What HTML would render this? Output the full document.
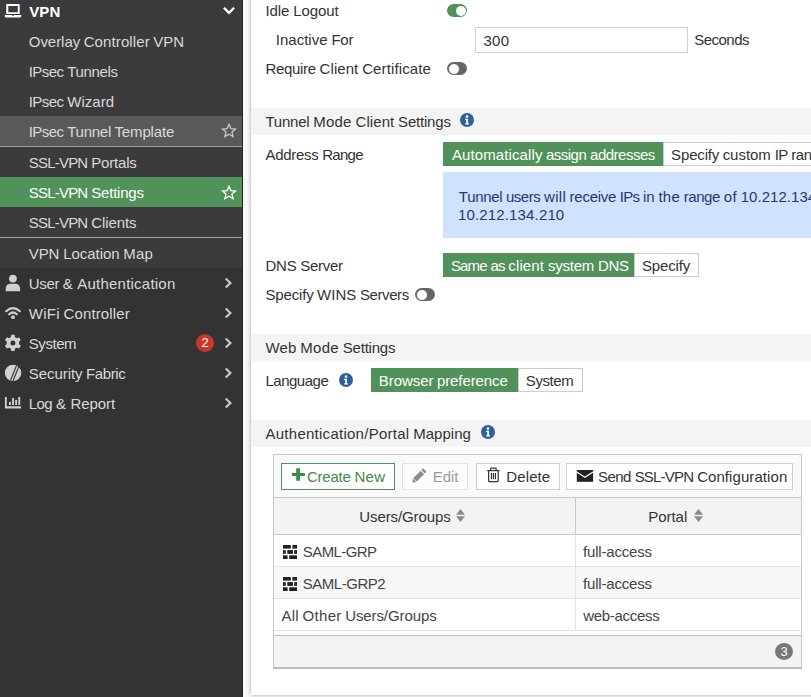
<!DOCTYPE html>
<html><head><meta charset="utf-8">
<style>
html,body{margin:0;padding:0;}
body{width:811px;height:697px;overflow:hidden;position:relative;background:#f9f9f9;font-family:"Liberation Sans",sans-serif;}
.a{position:absolute;}
.t{position:absolute;white-space:nowrap;}
.sb{left:0;top:0;width:242px;height:697px;background:#333333;}
.card{left:251px;top:-10px;width:600px;height:705px;background:#fff;box-shadow:0 0 4px rgba(0,0,0,0.35);}
.bar{left:251px;width:560px;height:27px;background:#f4f4f4;}
.gbtn{background:#51915a;}
.wbtn{background:#fff;border:1px solid #cccccc;box-sizing:border-box;}
.tog{width:20px;height:13px;border-radius:7px;box-sizing:border-box;}
.info{width:14px;height:14px;border-radius:50%;background:#2d6199;}
</style></head><body>
<!-- sidebar -->
<div class="a sb"></div>
<div class="a" style="left:0;top:0;width:242px;height:268px;background:#3b3b3b"></div>
<div class="a" style="left:242px;top:0;width:1px;height:697px;background:#262626"></div>
<div class="a" style="left:0;top:116px;width:242px;height:30px;background:#595959"></div>
<div class="a" style="left:0;top:146px;width:242px;height:1px;background:#a3a3a3"></div>
<div class="a" style="left:0;top:177px;width:242px;height:30px;background:#51915a"></div>
<div class="a" style="left:0;top:237px;width:242px;height:1px;background:#a3a3a3"></div>

<!-- card -->
<div class="a card"></div>
<div class="a bar" style="top:108px"></div>
<div class="a bar" style="top:334px"></div>
<div class="a bar" style="top:420px"></div>

<!-- toggles -->
<div class="a tog" style="left:447px;top:4px;background:#51915a"></div>
<div class="a" style="left:456px;top:5.5px;width:10px;height:10px;border-radius:50%;background:#fff"></div>
<div class="a tog" style="left:447px;top:62px;background:#666"></div>
<div class="a" style="left:447.5px;top:62.5px;width:12px;height:12px;border-radius:50%;background:#fff;border:1px solid #666;box-sizing:border-box"></div>
<div class="a tog" style="left:415px;top:288px;background:#666"></div>
<div class="a" style="left:415.5px;top:288.5px;width:12px;height:12px;border-radius:50%;background:#fff;border:1px solid #666;box-sizing:border-box"></div>

<!-- input -->
<div class="a" style="left:475px;top:27px;width:213px;height:26px;border:1px solid #cfcfcf;box-sizing:border-box;background:#fff"></div>

<!-- address range buttons -->
<div class="a gbtn" style="left:443px;top:142px;width:220px;height:24px"></div>
<div class="a wbtn" style="left:663px;top:142px;width:200px;height:24px"></div>
<div class="a" style="left:443px;top:172px;width:400px;height:66px;background:#cfe2ff"></div>

<!-- dns -->
<div class="a gbtn" style="left:443px;top:253px;width:191px;height:24px"></div>
<div class="a wbtn" style="left:634px;top:253px;width:65px;height:24px"></div>

<!-- language -->
<div class="a gbtn" style="left:371px;top:368px;width:147px;height:24px"></div>
<div class="a wbtn" style="left:518px;top:368px;width:65px;height:24px"></div>

<!-- info icons -->
<svg class="a" style="left:459.8px;top:112.8px" width="14" height="14" viewBox="0 0 14 14"><circle cx="7" cy="7" r="7" fill="#2d6199"/><circle cx="7" cy="3.6" r="1.3" fill="#fff"/><path d="M5.2 5.8h2.8v4.4h1v1.3H5.2v-1.3h1v-3.1h-1z" fill="#fff"/></svg>
<svg class="a" style="left:338.9px;top:372.9px" width="14" height="14" viewBox="0 0 14 14"><circle cx="7" cy="7" r="7" fill="#2d6199"/><circle cx="7" cy="3.6" r="1.3" fill="#fff"/><path d="M5.2 5.8h2.8v4.4h1v1.3H5.2v-1.3h1v-3.1h-1z" fill="#fff"/></svg>
<svg class="a" style="left:480.7px;top:425px" width="14" height="14" viewBox="0 0 14 14"><circle cx="7" cy="7" r="7" fill="#2d6199"/><circle cx="7" cy="3.6" r="1.3" fill="#fff"/><path d="M5.2 5.8h2.8v4.4h1v1.3H5.2v-1.3h1v-3.1h-1z" fill="#fff"/></svg>

<!-- table -->
<div class="a" style="left:273px;top:454px;width:529px;height:215px;border:1px solid #c8c8c8;border-bottom:2px solid #bdbdbd;box-sizing:border-box;background:#fff"></div>
<div class="a" style="left:274px;top:455px;width:527px;height:42px;background:#f9f9f9;border-bottom:1px solid #c8c8c8"></div>
<div class="a" style="left:281px;top:463px;width:114px;height:27px;border:1px solid #51915a;box-sizing:border-box;background:#fff"></div>
<div class="a" style="left:402px;top:463px;width:66px;height:27px;border:1px solid #e3e3e3;box-sizing:border-box;background:#fcfcfc"></div>
<div class="a" style="left:476px;top:463px;width:84px;height:27px;border:1px solid #cfcfcf;box-sizing:border-box;background:#fff"></div>
<div class="a" style="left:566px;top:463px;width:227px;height:27px;border:1px solid #cfcfcf;box-sizing:border-box;background:#fff"></div>
<!-- header -->
<div class="a" style="left:274px;top:498px;width:527px;height:36px;background:#f3f3f3;border-bottom:1px solid #c8c8c8"></div>
<div class="a" style="left:575px;top:498px;width:1px;height:36px;background:#c8c8c8"></div>
<div class="a" style="left:274px;top:566px;width:527px;height:1px;background:#e2e2e2"></div>
<div class="a" style="left:274px;top:567px;width:527px;height:31px;background:#f7f7f7"></div>
<div class="a" style="left:274px;top:598px;width:527px;height:1px;background:#e2e2e2"></div>
<div class="a" style="left:274px;top:630px;width:527px;height:1px;background:#e2e2e2"></div>
<div class="a" style="left:575px;top:535px;width:1px;height:96px;background:#e2e2e2"></div>
<!-- footer -->
<div class="a" style="left:274px;top:635px;width:527px;height:32px;background:#f3f3f3;border-top:1px solid #c0c0c0;box-sizing:border-box"></div>
<div class="a" style="left:775px;top:643px;width:18px;height:17px;border-radius:50%;background:#777;color:#fff;font-size:13px;line-height:17px;text-align:center">3</div>

<!-- sort icons -->
<svg class="a" style="left:455.8px;top:508.8px" width="9" height="13" viewBox="0 0 9 13"><path d="M4.5 0L9 5.8H0z M0 7.3H9L4.5 13z" fill="#8a8a8a"/></svg>
<svg class="a" style="left:693.6px;top:508.8px" width="9" height="13" viewBox="0 0 9 13"><path d="M4.5 0L9 5.8H0z M0 7.3H9L4.5 13z" fill="#8a8a8a"/></svg>


<!-- sidebar icons -->
<svg class="a" style="left:0;top:0" width="26" height="22" viewBox="0 0 26 22"><path d="M6.25 4h13.45v10.1H6.25z M8.3 6.1v6.1h9.5V6.1z" fill="#fff" fill-rule="evenodd"/><path d="M4.8 14.9h7.4v0.9h1.7v-0.9h7.3v1.4q0 1.3-1.3 1.3H6.1q-1.3 0-1.3-1.3z" fill="#fff"/></svg>
<svg class="a" style="left:220px;top:4px" width="18" height="14" viewBox="0 0 18 14"><path d="M4.7 4.6L9 8.9L13.3 4.6" fill="none" stroke="#fff" stroke-width="2.4" stroke-linecap="square"/></svg>
<svg class="a" style="left:220px;top:122px" width="18" height="18" viewBox="0 0 18 18"><path d="M9 2.3L10.9 6.6L15.5 7L12 10.1L13.1 14.6L9 12.2L4.9 14.6L6 10.1L2.5 7L7.1 6.6z" fill="none" stroke="#c8c8c8" stroke-width="1.3" stroke-linejoin="miter"/></svg>
<svg class="a" style="left:220px;top:183.5px" width="18" height="18" viewBox="0 0 18 18"><path d="M9 2.3L10.9 6.6L15.5 7L12 10.1L13.1 14.6L9 12.2L4.9 14.6L6 10.1L2.5 7L7.1 6.6z" fill="none" stroke="#fff" stroke-width="1.3" stroke-linejoin="miter"/></svg>
<svg class="a" style="left:0;top:268px" width="26" height="30" viewBox="0 0 26 30"><circle cx="12.9" cy="10.6" r="3.9" fill="#d0d0d0"/><path d="M5.7 23.2v-2.2q0-5.3 5.3-5.3h3.8q5.3 0 5.3 5.3v2.2z" fill="#d0d0d0"/></svg>
<svg class="a" style="left:0;top:298px" width="26" height="30" viewBox="0 0 26 30"><path d="M6.2 13.2Q13 7 19.8 13.2" fill="none" stroke="#d0d0d0" stroke-width="2.2" stroke-linecap="round"/><path d="M9.2 16.2Q13 12.8 16.8 16.2" fill="none" stroke="#d0d0d0" stroke-width="2.2" stroke-linecap="round"/><circle cx="13" cy="19.2" r="1.9" fill="#d0d0d0"/></svg>
<svg class="a" style="left:0;top:328px" width="26" height="30" viewBox="0 0 26 30"><g fill="#d0d0d0" transform="translate(12.9 14.9)"><circle r="6.2"/><rect x="-1.9" y="-8.2" width="3.8" height="16.4" rx="0.8"/><rect x="-1.9" y="-8.2" width="3.8" height="16.4" rx="0.8" transform="rotate(60)"/><rect x="-1.9" y="-8.2" width="3.8" height="16.4" rx="0.8" transform="rotate(120)"/></g><circle cx="12.9" cy="14.9" r="2.5" fill="#333"/></svg>
<svg class="a" style="left:0;top:358px" width="26" height="30" viewBox="0 0 26 30"><defs><clipPath id="fc"><circle cx="13.05" cy="14.9" r="8.2"/></clipPath></defs><circle cx="13.05" cy="14.9" r="8.2" fill="#d0d0d0"/><g clip-path="url(#fc)" stroke="#333" stroke-width="1.1"><path d="M17.5 5L9.5 25"/><path d="M20 5.5L12 25.5"/></g></svg>
<svg class="a" style="left:0;top:388px" width="26" height="30" viewBox="0 0 26 30"><path d="M4.9 9h1.9v9.3H21v2.2H4.9z" fill="#d0d0d0"/><rect x="9" y="13.9" width="1.9" height="3.1" fill="#d0d0d0"/><rect x="12.1" y="10" width="1.9" height="7" fill="#d0d0d0"/><rect x="15.2" y="11.9" width="1.9" height="5.1" fill="#d0d0d0"/><rect x="18.3" y="9" width="1.9" height="8" fill="#d0d0d0"/></svg>
<svg class="a" style="left:220px;top:268px" width="18" height="150" viewBox="0 0 18 150"><g fill="none" stroke="#c8c8c8" stroke-width="2.2" stroke-linecap="square"><path d="M6.5 11.3L10.4 15L6.5 18.7"/><path d="M6.5 41.3L10.4 45L6.5 48.7"/><path d="M6.5 71.3L10.4 75L6.5 78.7"/><path d="M6.5 101.3L10.4 105L6.5 108.7"/><path d="M6.5 131.3L10.4 135L6.5 138.7"/></g></svg>
<div class="a" style="left:196px;top:334px;width:18px;height:18px;border-radius:50%;background:#c9372c;color:#fff;font-size:13px;line-height:18px;text-align:center">2</div>

<!-- table icons -->
<svg class="a" style="left:290px;top:466px" width="17" height="17" viewBox="0 0 17 17"><path d="M6.2 2.2h3.9v4.8h4.8v3H10.1v4.8H6.2V10H2V7h4.2z" fill="#3f8a44"/></svg>
<svg class="a" style="left:410px;top:466px" width="19" height="19" viewBox="0 0 19 19"><path d="M13 2.3l3.5 3.5-1.6 1.6-3.5-3.5z M10.6 4.7l3.5 3.5-7.3 7.3-3.5-3.5z M2.9 12.4l3.5 3.5-3.8 0.9z" fill="#8c8c8c"/></svg>
<svg class="a" style="left:485px;top:466px" width="17" height="18" viewBox="0 0 17 18"><g fill="none" stroke="#333" stroke-width="1.2"><path d="M2.2 4.6H14.6"/><path d="M5.6 4.5V2.9q0-0.8 0.8-0.8h4q0.8 0 0.8 0.8v1.6"/><path d="M3.6 4.6v10.1q0 1 1 1h7.6q1 0 1-1V4.6"/><path d="M6.4 7v6.2 M8.4 7v6.2 M10.4 7v6.2"/></g></svg>
<svg class="a" style="left:576px;top:469px" width="18" height="14" viewBox="0 0 18 14"><path d="M0.8 1h16.3v11.8H0.8z" fill="#222"/><path d="M0.8 3L8.9 8.3L17.1 3" fill="none" stroke="#fff" stroke-width="1.2"/></svg>
<svg class="a" style="left:283px;top:545px" width="14" height="14" viewBox="0 0 14 14"><g fill="#222"><rect x="0" y="0" width="7.8" height="3.6"/><rect x="9.4" y="0" width="4.6" height="3.6"/><rect x="0" y="5.1" width="2.7" height="3.8"/><rect x="4.3" y="5.1" width="5.7" height="3.8"/><rect x="11.2" y="5.1" width="2.8" height="3.8"/><rect x="0" y="10.3" width="4.6" height="3.7"/><rect x="6.2" y="10.3" width="7.8" height="3.7"/></g></svg>
<svg class="a" style="left:283px;top:577px" width="14" height="14" viewBox="0 0 14 14"><g fill="#222"><rect x="0" y="0" width="7.8" height="3.6"/><rect x="9.4" y="0" width="4.6" height="3.6"/><rect x="0" y="5.1" width="2.7" height="3.8"/><rect x="4.3" y="5.1" width="5.7" height="3.8"/><rect x="11.2" y="5.1" width="2.8" height="3.8"/><rect x="0" y="10.3" width="4.6" height="3.7"/><rect x="6.2" y="10.3" width="7.8" height="3.7"/></g></svg>

<div class="t" style="left:29.20px;top:2.6px;color:#ffffff;font-size:15px;line-height:17px;font-weight:700;letter-spacing:0.141px">VPN</div>
<div class="t" style="left:28.75px;top:33.0px;color:#d9d9d9;font-size:15px;line-height:17px;font-weight:400;letter-spacing:-0.036px">Overlay</div>
<div class="t" style="left:83.67px;top:33.0px;color:#d9d9d9;font-size:15px;line-height:17px;font-weight:400;letter-spacing:0.111px">Controller</div>
<div class="t" style="left:153.33px;top:33.0px;color:#d9d9d9;font-size:15px;line-height:17px;font-weight:400;letter-spacing:-0.073px">VPN</div>
<div class="t" style="left:28.75px;top:63.0px;color:#d9d9d9;font-size:15px;line-height:17px;font-weight:400;letter-spacing:-0.581px">IPsec</div>
<div class="t" style="left:67.19px;top:63.0px;color:#d9d9d9;font-size:15px;line-height:17px;font-weight:400;letter-spacing:-0.350px">Tunnels</div>
<div class="t" style="left:28.75px;top:93.0px;color:#d9d9d9;font-size:15px;line-height:17px;font-weight:400;letter-spacing:-0.581px">IPsec</div>
<div class="t" style="left:67.19px;top:93.0px;color:#d9d9d9;font-size:15px;line-height:17px;font-weight:400;letter-spacing:0.036px">Wizard</div>
<div class="t" style="left:28.75px;top:123.0px;color:#d9d9d9;font-size:15px;line-height:17px;font-weight:400;letter-spacing:-0.581px">IPsec</div>
<div class="t" style="left:67.19px;top:123.0px;color:#d9d9d9;font-size:15px;line-height:17px;font-weight:400;letter-spacing:-0.242px">Tunnel</div>
<div class="t" style="left:114.44px;top:123.0px;color:#d9d9d9;font-size:15px;line-height:17px;font-weight:400;letter-spacing:-0.127px">Template</div>
<div class="t" style="left:28.75px;top:154.0px;color:#d9d9d9;font-size:15px;line-height:17px;font-weight:400;letter-spacing:-0.795px">SSL-VPN</div>
<div class="t" style="left:91.23px;top:154.0px;color:#d9d9d9;font-size:15px;line-height:17px;font-weight:400;letter-spacing:-0.176px">Portals</div>
<div class="t" style="left:28.75px;top:184.0px;color:#ffffff;font-size:15px;line-height:17px;font-weight:400;letter-spacing:-0.795px">SSL-VPN</div>
<div class="t" style="left:91.23px;top:184.0px;color:#ffffff;font-size:15px;line-height:17px;font-weight:400;letter-spacing:-0.201px">Settings</div>
<div class="t" style="left:28.75px;top:214.0px;color:#d9d9d9;font-size:15px;line-height:17px;font-weight:400;letter-spacing:-0.795px">SSL-VPN</div>
<div class="t" style="left:91.23px;top:214.0px;color:#d9d9d9;font-size:15px;line-height:17px;font-weight:400;letter-spacing:-0.092px">Clients</div>
<div class="t" style="left:28.75px;top:245.0px;color:#d9d9d9;font-size:15px;line-height:17px;font-weight:400;letter-spacing:-0.073px">VPN</div>
<div class="t" style="left:63.22px;top:245.0px;color:#d9d9d9;font-size:15px;line-height:17px;font-weight:400;letter-spacing:-0.053px">Location</div>
<div class="t" style="left:123.34px;top:245.0px;color:#d9d9d9;font-size:15px;line-height:17px;font-weight:400;letter-spacing:0.130px">Map</div>
<div class="t" style="left:28.75px;top:275.0px;color:#d9d9d9;font-size:15px;line-height:17px;font-weight:400;letter-spacing:-0.277px">User</div>
<div class="t" style="left:62.83px;top:275.0px;color:#d9d9d9;font-size:15px;line-height:17px;font-weight:400;letter-spacing:0.672px">&amp;</div>
<div class="t" style="left:77.34px;top:275.0px;color:#d9d9d9;font-size:15px;line-height:17px;font-weight:400;letter-spacing:0.219px">Authentication</div>
<div class="t" style="left:28.75px;top:305.0px;color:#d9d9d9;font-size:15px;line-height:17px;font-weight:400;letter-spacing:0.258px">WiFi</div>
<div class="t" style="left:63.62px;top:305.0px;color:#d9d9d9;font-size:15px;line-height:17px;font-weight:400;letter-spacing:0.111px">Controller</div>
<div class="t" style="left:28.75px;top:335.0px;color:#d9d9d9;font-size:15px;line-height:17px;font-weight:400;letter-spacing:-0.430px">System</div>
<div class="t" style="left:28.75px;top:365.0px;color:#d9d9d9;font-size:15px;line-height:17px;font-weight:400;letter-spacing:-0.059px">Security</div>
<div class="t" style="left:85.94px;top:365.0px;color:#d9d9d9;font-size:15px;line-height:17px;font-weight:400;letter-spacing:-0.365px">Fabric</div>
<div class="t" style="left:28.75px;top:395.0px;color:#d9d9d9;font-size:15px;line-height:17px;font-weight:400;letter-spacing:-0.531px">Log</div>
<div class="t" style="left:56.02px;top:395.0px;color:#d9d9d9;font-size:15px;line-height:17px;font-weight:400;letter-spacing:0.672px">&amp;</div>
<div class="t" style="left:70.55px;top:395.0px;color:#d9d9d9;font-size:15px;line-height:17px;font-weight:400;letter-spacing:-0.073px">Report</div>
<div class="t" style="left:265.50px;top:1.7px;color:#333333;font-size:15px;line-height:17px;font-weight:400;letter-spacing:-0.086px">Idle</div>
<div class="t" style="left:293.19px;top:1.7px;color:#333333;font-size:15px;line-height:17px;font-weight:400;letter-spacing:-0.055px">Logout</div>
<div class="t" style="left:275.80px;top:30.8px;color:#333333;font-size:15px;line-height:17px;font-weight:400;letter-spacing:0.008px">Inactive</div>
<div class="t" style="left:331.41px;top:30.8px;color:#333333;font-size:15px;line-height:17px;font-weight:400;letter-spacing:-0.234px">For</div>
<div class="t" style="left:483.43px;top:31.7px;color:#333333;font-size:15px;line-height:17px;font-weight:400;letter-spacing:0.359px">300</div>
<div class="t" style="left:694.22px;top:30.7px;color:#333333;font-size:15px;line-height:17px;font-weight:400;letter-spacing:-0.509px">Seconds</div>
<div class="t" style="left:265.50px;top:59.8px;color:#333333;font-size:15px;line-height:17px;font-weight:400;letter-spacing:-0.324px">Require</div>
<div class="t" style="left:319.61px;top:59.8px;color:#333333;font-size:15px;line-height:17px;font-weight:400;letter-spacing:0.062px">Client</div>
<div class="t" style="left:362.17px;top:59.8px;color:#333333;font-size:15px;line-height:17px;font-weight:400;letter-spacing:0.121px">Certificate</div>
<div class="t" style="left:265.50px;top:113.2px;color:#333333;font-size:15px;line-height:17px;font-weight:400;letter-spacing:-0.242px">Tunnel</div>
<div class="t" style="left:313.20px;top:113.2px;color:#333333;font-size:15px;line-height:17px;font-weight:400;letter-spacing:0.250px">Mode</div>
<div class="t" style="left:355.56px;top:113.2px;color:#333333;font-size:15px;line-height:17px;font-weight:400;letter-spacing:0.062px">Client</div>
<div class="t" style="left:398.12px;top:113.2px;color:#333333;font-size:15px;line-height:17px;font-weight:400;letter-spacing:-0.201px">Settings</div>
<div class="t" style="left:265.50px;top:145.5px;color:#333333;font-size:15px;line-height:17px;font-weight:400;letter-spacing:-0.310px">Address</div>
<div class="t" style="left:322.20px;top:145.5px;color:#333333;font-size:15px;line-height:17px;font-weight:400;letter-spacing:-0.697px">Range</div>
<div class="t" style="left:451.97px;top:145.8px;color:#ffffff;font-size:15px;line-height:17px;font-weight:400;letter-spacing:0.103px">Automatically</div>
<div class="t" style="left:545.99px;top:145.8px;color:#ffffff;font-size:15px;line-height:17px;font-weight:400;letter-spacing:-0.523px">assign</div>
<div class="t" style="left:590.05px;top:145.8px;color:#ffffff;font-size:15px;line-height:17px;font-weight:400;letter-spacing:-0.498px">addresses</div>
<div class="t" style="left:671.12px;top:145.8px;color:#333333;font-size:15px;line-height:17px;font-weight:400;letter-spacing:-0.163px">Specify</div>
<div class="t" style="left:722.65px;top:145.8px;color:#333333;font-size:15px;line-height:17px;font-weight:400;letter-spacing:-0.026px">custom</div>
<div class="t" style="left:774.70px;top:145.8px;color:#333333;font-size:15px;line-height:17px;font-weight:400;letter-spacing:-0.484px">IP</div>
<div class="t" style="left:791.32px;top:145.8px;color:#333333;font-size:15px;line-height:17px;font-weight:400;letter-spacing:-0.435px">ranges</div>
<div class="t" style="left:458.86px;top:188.0px;color:#1e3a6e;font-size:15px;line-height:17px;font-weight:400;letter-spacing:-0.337px">Tunnel</div>
<div class="t" style="left:505.95px;top:188.0px;color:#1e3a6e;font-size:15px;line-height:17px;font-weight:400;letter-spacing:-0.490px">users</div>
<div class="t" style="left:543.98px;top:188.0px;color:#1e3a6e;font-size:15px;line-height:17px;font-weight:400;letter-spacing:0.333px">will</div>
<div class="t" style="left:569.62px;top:188.0px;color:#1e3a6e;font-size:15px;line-height:17px;font-weight:400;letter-spacing:-0.270px">receive</div>
<div class="t" style="left:619.87px;top:188.0px;color:#1e3a6e;font-size:15px;line-height:17px;font-weight:400;letter-spacing:-0.809px">IPs</div>
<div class="t" style="left:642.92px;top:188.0px;color:#1e3a6e;font-size:15px;line-height:17px;font-weight:400;letter-spacing:0.071px">in</div>
<div class="t" style="left:658.53px;top:188.0px;color:#1e3a6e;font-size:15px;line-height:17px;font-weight:400;letter-spacing:0.177px">the</div>
<div class="t" style="left:683.70px;top:188.0px;color:#1e3a6e;font-size:15px;line-height:17px;font-weight:400;letter-spacing:-0.417px">range</div>
<div class="t" style="left:723.78px;top:188.0px;color:#1e3a6e;font-size:15px;line-height:17px;font-weight:400;letter-spacing:0.458px">of</div>
<div class="t" style="left:740.71px;top:188.0px;color:#1e3a6e;font-size:15px;line-height:17px;font-weight:400;letter-spacing:0.047px">10.212.134.200</div>
<div class="t" style="left:849.45px;top:188.0px;color:#1e3a6e;font-size:15px;line-height:17px;font-weight:400;letter-spacing:0.506px">-</div>
<div class="t" style="left:458.06px;top:206.2px;color:#1e3a6e;font-size:15px;line-height:17px;font-weight:400;letter-spacing:0.146px">10.212.134.210</div>
<div class="t" style="left:265.50px;top:257.0px;color:#333333;font-size:15px;line-height:17px;font-weight:400;letter-spacing:-0.224px">DNS</div>
<div class="t" style="left:300.34px;top:257.0px;color:#333333;font-size:15px;line-height:17px;font-weight:400;letter-spacing:-0.299px">Server</div>
<div class="t" style="left:450.92px;top:256.6px;color:#ffffff;font-size:15px;line-height:17px;font-weight:400;letter-spacing:-0.859px">Same</div>
<div class="t" style="left:490.51px;top:256.6px;color:#ffffff;font-size:15px;line-height:17px;font-weight:400;letter-spacing:-0.945px">as</div>
<div class="t" style="left:508.29px;top:256.6px;color:#ffffff;font-size:15px;line-height:17px;font-weight:400;letter-spacing:0.141px">client</div>
<div class="t" style="left:548.01px;top:256.6px;color:#ffffff;font-size:15px;line-height:17px;font-weight:400;letter-spacing:-0.242px">system</div>
<div class="t" style="left:597.89px;top:256.6px;color:#ffffff;font-size:15px;line-height:17px;font-weight:400;letter-spacing:-0.224px">DNS</div>
<div class="t" style="left:642.02px;top:256.5px;color:#333333;font-size:15px;line-height:17px;font-weight:400;letter-spacing:-0.163px">Specify</div>
<div class="t" style="left:265.50px;top:285.8px;color:#333333;font-size:15px;line-height:17px;font-weight:400;letter-spacing:-0.163px">Specify</div>
<div class="t" style="left:317.03px;top:285.8px;color:#333333;font-size:15px;line-height:17px;font-weight:400;letter-spacing:0.039px">WINS</div>
<div class="t" style="left:359.98px;top:285.8px;color:#333333;font-size:15px;line-height:17px;font-weight:400;letter-spacing:-0.406px">Servers</div>
<div class="t" style="left:265.50px;top:338.7px;color:#333333;font-size:15px;line-height:17px;font-weight:400;letter-spacing:0.146px">Web</div>
<div class="t" style="left:300.36px;top:338.7px;color:#333333;font-size:15px;line-height:17px;font-weight:400;letter-spacing:0.250px">Mode</div>
<div class="t" style="left:342.72px;top:338.7px;color:#333333;font-size:15px;line-height:17px;font-weight:400;letter-spacing:-0.201px">Settings</div>
<div class="t" style="left:265.50px;top:371.9px;color:#333333;font-size:15px;line-height:17px;font-weight:400;letter-spacing:-0.500px">Language</div>
<div class="t" style="left:378.77px;top:371.7px;color:#ffffff;font-size:15px;line-height:17px;font-weight:400;letter-spacing:-0.047px">Browser</div>
<div class="t" style="left:436.97px;top:371.7px;color:#ffffff;font-size:15px;line-height:17px;font-weight:400;letter-spacing:-0.098px">preference</div>
<div class="t" style="left:525.82px;top:371.7px;color:#333333;font-size:15px;line-height:17px;font-weight:400;letter-spacing:-0.430px">System</div>
<div class="t" style="left:265.50px;top:425.0px;color:#333333;font-size:15px;line-height:17px;font-weight:400;letter-spacing:0.260px">Authentication/Portal</div>
<div class="t" style="left:413.22px;top:425.0px;color:#333333;font-size:15px;line-height:17px;font-weight:400;letter-spacing:0.029px">Mapping</div>
<div class="t" style="left:306.94px;top:467.8px;color:#3f8a44;font-size:15px;line-height:17px;font-weight:400;letter-spacing:-0.227px">Create</div>
<div class="t" style="left:354.45px;top:467.8px;color:#3f8a44;font-size:15px;line-height:17px;font-weight:400;letter-spacing:0.281px">New</div>
<div class="t" style="left:432.77px;top:467.8px;color:#9a9a9a;font-size:15px;line-height:17px;font-weight:400;letter-spacing:-0.031px">Edit</div>
<div class="t" style="left:506.37px;top:467.8px;color:#333333;font-size:15px;line-height:17px;font-weight:400;letter-spacing:0.089px">Delete</div>
<div class="t" style="left:598.02px;top:467.8px;color:#333333;font-size:15px;line-height:17px;font-weight:400;letter-spacing:-0.562px">Send</div>
<div class="t" style="left:634.64px;top:467.8px;color:#333333;font-size:15px;line-height:17px;font-weight:400;letter-spacing:-0.795px">SSL-VPN</div>
<div class="t" style="left:697.13px;top:467.8px;color:#333333;font-size:15px;line-height:17px;font-weight:400;letter-spacing:0.073px">Configuration</div>
<div class="t" style="left:359.24px;top:507.8px;color:#333333;font-size:15px;line-height:17px;font-weight:400;letter-spacing:-0.094px">Users/Groups</div>
<div class="t" style="left:648.27px;top:507.8px;color:#333333;font-size:15px;line-height:17px;font-weight:400;letter-spacing:-0.039px">Portal</div>
<div class="t" style="left:302.82px;top:543.3px;color:#444444;font-size:15px;line-height:17px;font-weight:400;letter-spacing:-0.594px">SAML-GRP</div>
<div class="t" style="left:583.09px;top:543.3px;color:#444444;font-size:15px;line-height:17px;font-weight:400;letter-spacing:-0.196px">full-access</div>
<div class="t" style="left:302.82px;top:575.3px;color:#444444;font-size:15px;line-height:17px;font-weight:400;letter-spacing:-0.490px">SAML-GRP2</div>
<div class="t" style="left:583.09px;top:575.3px;color:#444444;font-size:15px;line-height:17px;font-weight:400;letter-spacing:-0.196px">full-access</div>
<div class="t" style="left:281.47px;top:606.8px;color:#444444;font-size:15px;line-height:17px;font-weight:400;letter-spacing:0.182px">All</div>
<div class="t" style="left:302.52px;top:606.8px;color:#444444;font-size:15px;line-height:17px;font-weight:400;letter-spacing:0.319px">Other</div>
<div class="t" style="left:345.16px;top:606.8px;color:#444444;font-size:15px;line-height:17px;font-weight:400;letter-spacing:-0.094px">Users/Groups</div>
<div class="t" style="left:583.32px;top:606.8px;color:#444444;font-size:15px;line-height:17px;font-weight:400;letter-spacing:-0.320px">web-access</div>
</body></html>
